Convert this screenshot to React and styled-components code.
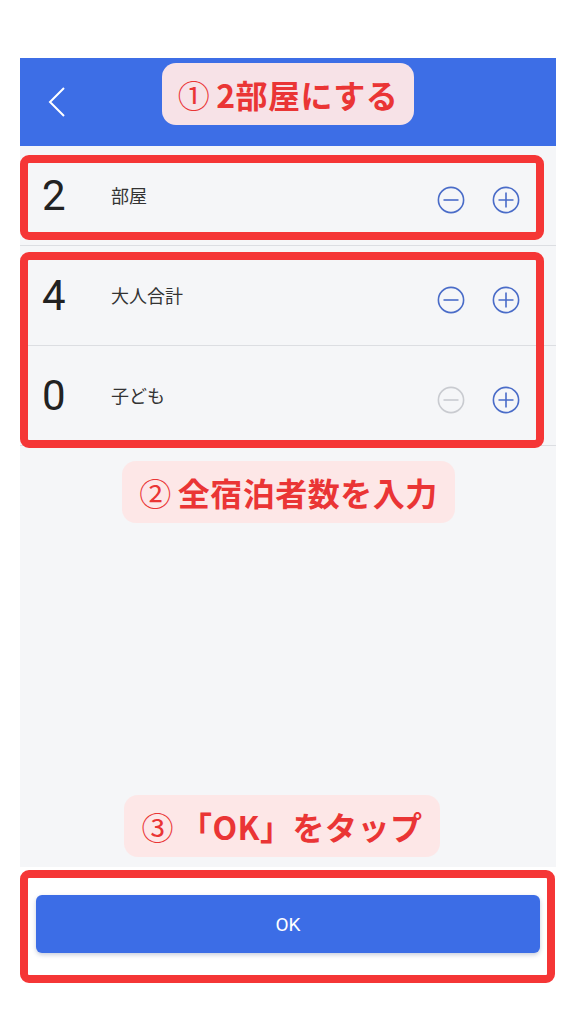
import React from 'react'
import styled, { createGlobalStyle } from 'styled-components'

const GlobalStyle = createGlobalStyle`
  html, body {
    margin: 0;
    padding: 0;
    background: #ffffff;
  }
  body {
    font-family: Roboto, "Noto Sans CJK JP", sans-serif;
  }
`

const Page = styled.div`
  width: 576px;
  min-height: 1024px;
  padding: 58px 20px 0;
  box-sizing: border-box;
`

const Screen = styled.div`
  position: relative;
  width: 536px;
  display: flex;
  flex-direction: column;
`

const Header = styled.header`
  height: 88px;
  background: #3d6ee6;
  display: flex;
  align-items: center;
  padding-left: 26px;
`

const BackButton = styled.button`
  border: 0;
  background: none;
  padding: 0;
  width: 22px;
  height: 32px;
  display: flex;
  align-items: center;
  justify-content: center;
`

const Body = styled.main`
  background: #f5f6f8;
  height: 721px;
  display: flex;
  flex-direction: column;
`

const Row = styled.div`
  height: 99px;
  display: flex;
  align-items: center;
  border-bottom: 1px solid #dcdee2;
  padding: 0 36px 0 22px;
`

const Count = styled.span`
  width: 69px;
  font-family: Roboto, sans-serif;
  font-size: 42px;
  font-weight: 400;
  color: #222;
  line-height: 1;
  margin-top: 0;
`

const Label = styled.span`
  flex: 1;
  font-family: "Noto Sans CJK JP", sans-serif;
  font-size: 18px;
  color: #333;
  margin-top: -2px;
`

const Stepper = styled.div`
  display: flex;
  gap: 27px;
  align-items: center;
  margin-top: 8px;
`

const StepButton = styled.button`
  border: 0;
  background: none;
  padding: 0;
  width: 28px;
  height: 28px;
  color: ${p => (p.disabled ? '#c9cbd0' : '#4a6cc8')};
`

const Footer = styled.footer`
  background: #ffffff;
  padding: 28px 16px 32px;
`

const OkButton = styled.button`
  width: 100%;
  height: 58px;
  border: 0;
  border-radius: 6px;
  background: #3c6de6;
  color: #ffffff;
  font-family: Roboto, sans-serif;
  font-size: 19px;
  box-shadow: 0 2px 4px rgba(40, 60, 120, 0.25);
`

const Frame = styled.div`
  position: absolute;
  left: 0;
  top: ${p => p.top}px;
  width: ${p => p.w}px;
  height: ${p => p.h}px;
  border: 8px solid #f53636;
  border-radius: 9px;
  box-sizing: border-box;
  pointer-events: none;
`

const Callout = styled.div`
  position: absolute;
  left: ${p => p.left}px;
  top: ${p => p.top}px;
  width: ${p => p.w}px;
  height: 62px;
  border-radius: 14px;
  background: rgba(253, 230, 230, 0.97);
  color: #ea3535;
  font-family: "Noto Sans CJK JP", sans-serif;
  font-weight: 700;
  font-size: 32px;
  display: flex;
  align-items: center;
  justify-content: center;
  white-space: nowrap;
  letter-spacing: 0.5px;
`

const Circled = styled.span`
  font-weight: 400;
  margin-right: 6px;
`

const MinusIcon = () => (
  <svg width="28" height="28" viewBox="0 0 28 28" fill="none" stroke="currentColor" strokeWidth="1.6">
    <circle cx="14" cy="14" r="12.6" />
    <path d="M6.5 14h15" />
  </svg>
)

const PlusIcon = () => (
  <svg width="28" height="28" viewBox="0 0 28 28" fill="none" stroke="currentColor" strokeWidth="1.6">
    <circle cx="14" cy="14" r="12.6" />
    <path d="M6.5 14h15M14 6.5v15" />
  </svg>
)

const rows = [
  { count: 2, label: '部屋', canMinus: true },
  { count: 4, label: '大人合計', canMinus: true },
  { count: 0, label: '子ども', canMinus: false },
]

const App = () => {
  return (
    <Page>
      <GlobalStyle />
      <Screen>
        <Header>
          <BackButton aria-label="戻る">
            <svg width="20" height="32" viewBox="0 0 20 32" fill="none" stroke="#fff" strokeWidth="2">
              <path d="M17 2 3 16l14 14" />
            </svg>
          </BackButton>
        </Header>
        <Body>
          {rows.map(r => (
            <Row key={r.label}>
              <Count>{r.count}</Count>
              <Label>{r.label}</Label>
              <Stepper>
                <StepButton disabled={!r.canMinus}>
                  <MinusIcon />
                </StepButton>
                <StepButton>
                  <PlusIcon />
                </StepButton>
              </Stepper>
            </Row>
          ))}
        </Body>
        <Footer>
          <OkButton>OK</OkButton>
        </Footer>

        <Frame top={97} w={524} h={85} />
        <Frame top={194} w={524} h={196} />
        <Frame top={812} w={535} h={113} />

        <Callout left={142} top={5} w={252}>
          <Circled>①</Circled>2部屋にする
        </Callout>
        <Callout left={102} top={403} w={333}>
          <Circled>②</Circled>全宿泊者数を入力
        </Callout>
        <Callout left={104} top={737} w={316}>
          <Circled>③</Circled>「OK」をタップ
        </Callout>
      </Screen>
    </Page>
  )
}

export default App
